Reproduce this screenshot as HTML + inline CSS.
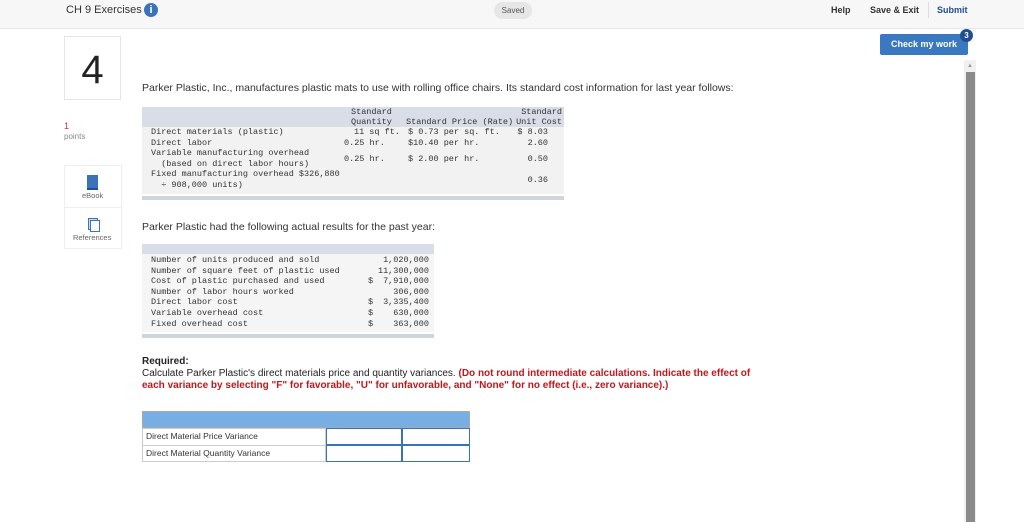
<!DOCTYPE html><html><head><style>
body{margin:0;width:1024px;height:522px;background:#fff;font-family:"Liberation Sans",sans-serif;position:relative;overflow:hidden}
.a{position:absolute}
.m{position:absolute;font-family:"Liberation Mono",monospace;font-size:8.5px;color:#333;white-space:pre;line-height:10.6px}
.r{text-align:right}
</style></head><body>
<div class="a" style="left:0;top:0;width:1024px;height:28px;background:#f7f7f7;border-bottom:1px solid #e6e6e6"></div>
<div class="a" style="left:66px;top:4px;font-size:11px;color:#333">CH 9 Exercises</div>
<div class="a" style="left:144px;top:3px;width:14px;height:14px;border-radius:7px;background:#3b73b9;color:#fff;font-size:11px;font-weight:bold;text-align:center;line-height:14px">i</div>
<div class="a" style="left:494px;top:2px;width:38px;height:17px;border-radius:9px;background:#e6e6e6;font-size:8px;color:#555;text-align:center;line-height:17px">Saved</div>
<div class="a" style="left:831px;top:5px;font-size:9px;font-weight:bold;color:#333">Help</div>
<div class="a" style="left:870px;top:5px;font-size:9px;font-weight:bold;color:#333">Save &amp; Exit</div>
<div class="a" style="left:928px;top:2px;width:1px;height:16px;background:#ddd"></div>
<div class="a" style="left:937px;top:5px;font-size:9px;font-weight:bold;color:#1f4f91">Submit</div>
<div class="a" style="left:880px;top:34px;width:88px;height:21px;background:#3b78c2;border-radius:2px;color:#fff;font-size:9px;font-weight:bold;text-align:center;line-height:21px">Check my work</div>
<div class="a" style="left:960px;top:29px;width:13px;height:13px;border-radius:7px;background:#1f4f91;color:#fff;font-size:8px;font-weight:bold;text-align:center;line-height:13px">3</div>
<div class="a" style="left:64px;top:36px;width:57px;height:64px;border:1px solid #e6e6e6;box-sizing:border-box;font-size:40px;text-align:center;line-height:66px;color:#222">4</div>
<div class="a" style="left:64px;top:121px;font-size:9px;color:#c33">1</div>
<div class="a" style="left:64px;top:132px;font-size:8px;color:#888">points</div>
<div class="a" style="left:64px;top:165px;width:58px;height:84px;border:1px solid #eee;box-sizing:border-box"></div>
<div class="a" style="left:64px;top:207px;width:58px;height:1px;background:#eee"></div>
<div class="a" style="left:87px;top:175px;width:11px;height:13px;background:#3b73b9;border-bottom:2px solid #1f4f91"></div>
<div class="a" style="left:82px;top:191px;font-size:7.5px;color:#666">eBook</div>
<div class="a" style="left:88px;top:218px;width:8px;height:10px;border:1px solid #3b73b9;background:#cfdcee"></div>
<div class="a" style="left:90px;top:220px;width:8px;height:10px;border:1px solid #3b73b9;background:#fff"></div>
<div class="a" style="left:73px;top:233px;font-size:7.5px;color:#666">References</div>
<div class="a" style="left:142px;top:82px;font-size:10.5px;color:#333;white-space:nowrap">Parker Plastic, Inc., manufactures plastic mats to use with rolling office chairs. Its standard cost information for last year follows:</div>
<div class="a" style="left:142px;top:107px;width:422px;height:20px;background:#d8dde8"></div>
<div class="a" style="left:142px;top:127px;width:422px;height:67px;background:#f2f2f2"></div>
<div class="a" style="left:142px;top:196px;width:422px;height:4px;background:#d0d4dc"></div>
<div class="m" style="left:351px;top:107px;line-height:10px">Standard
Quantity</div>
<div class="m" style="left:406px;top:117px;line-height:10px">Standard Price (Rate)</div>
<div class="m r" style="left:500px;top:107px;width:62px;line-height:10px">Standard
Unit Cost</div>
<div class="m" style="left:151px;top:127px">Direct materials (plastic)
Direct labor
Variable manufacturing overhead
  (based on direct labor hours)
Fixed manufacturing overhead $326,880
  ÷ 908,000 units)</div>
<div class="m" style="left:354px;top:127px">11 sq ft.</div>
<div class="m" style="left:344px;top:137.6px">0.25 hr.</div>
<div class="m" style="left:344px;top:154px">0.25 hr.</div>
<div class="m" style="left:408px;top:127px">$ 0.73 per sq. ft.
$10.40 per hr.</div>
<div class="m" style="left:408px;top:154px">$ 2.00 per hr.</div>
<div class="m r" style="left:490px;top:127px;width:58px">$ 8.03
2.60</div>
<div class="m r" style="left:490px;top:154px;width:58px">0.50</div>
<div class="m r" style="left:490px;top:175px;width:58px">0.36</div>
<div class="a" style="left:142px;top:221px;font-size:10.5px;color:#333">Parker Plastic had the following actual results for the past year:</div>
<div class="a" style="left:142px;top:244px;width:292px;height:10px;background:#d8dde8"></div>
<div class="a" style="left:142px;top:254px;width:292px;height:78px;background:#f5f5f5"></div>
<div class="a" style="left:142px;top:334px;width:292px;height:4px;background:#d0d4dc"></div>
<div class="m" style="left:151px;top:255px">Number of units produced and sold
Number of square feet of plastic used
Cost of plastic purchased and used
Number of labor hours worked
Direct labor cost
Variable overhead cost
Fixed overhead cost</div>
<div class="m" style="left:368px;top:255px">

$

$
$
$</div>
<div class="m r" style="left:370px;top:255px;width:59px">1,020,000
11,300,000
7,910,000
306,000
3,335,400
630,000
363,000</div>
<div class="a" style="left:142px;top:356px;font-size:10px;color:#222;line-height:12px;width:662px"><b>Required:</b><br>Calculate Parker Plastic's direct materials price and quantity variances. <b style="color:#c3161c">(Do not round intermediate calculations. Indicate the effect of<br>each variance by selecting "F" for favorable, "U" for unfavorable, and "None" for no effect (i.e., zero variance).)</b></div>
<div class="a" style="left:142px;top:411px;width:328px;height:17px;background:#77aee3;border:1px solid #aaa;box-sizing:border-box"></div>
<div class="a" style="left:142px;top:428px;width:184px;height:34px;border:1px solid #ccc;box-sizing:border-box"></div>
<div class="a" style="left:142px;top:445px;width:184px;height:1px;background:#ccc"></div>
<div class="a" style="left:146px;top:431px;font-size:8.5px;color:#333">Direct Material Price Variance</div>
<div class="a" style="left:146px;top:448px;font-size:8.5px;color:#333">Direct Material Quantity Variance</div>
<div class="a" style="left:326px;top:428px;width:76px;height:17px;border:1px solid #3b73b9;box-sizing:border-box"></div>
<div class="a" style="left:402px;top:428px;width:68px;height:17px;border:1px solid #3b73b9;box-sizing:border-box"></div>
<div class="a" style="left:326px;top:445px;width:76px;height:17px;border:1px solid #3b73b9;box-sizing:border-box"></div>
<div class="a" style="left:402px;top:445px;width:68px;height:17px;border:1px solid #3b73b9;box-sizing:border-box"></div>
<div class="a" style="left:964px;top:60px;width:12px;height:462px;background:#f0f0f0"></div>
<div class="a" style="left:966px;top:72px;width:9px;height:450px;background:#8a8a8a"></div>
<div class="a" style="left:967px;top:63px;font-size:6px;color:#999">▲</div>
</body></html>
